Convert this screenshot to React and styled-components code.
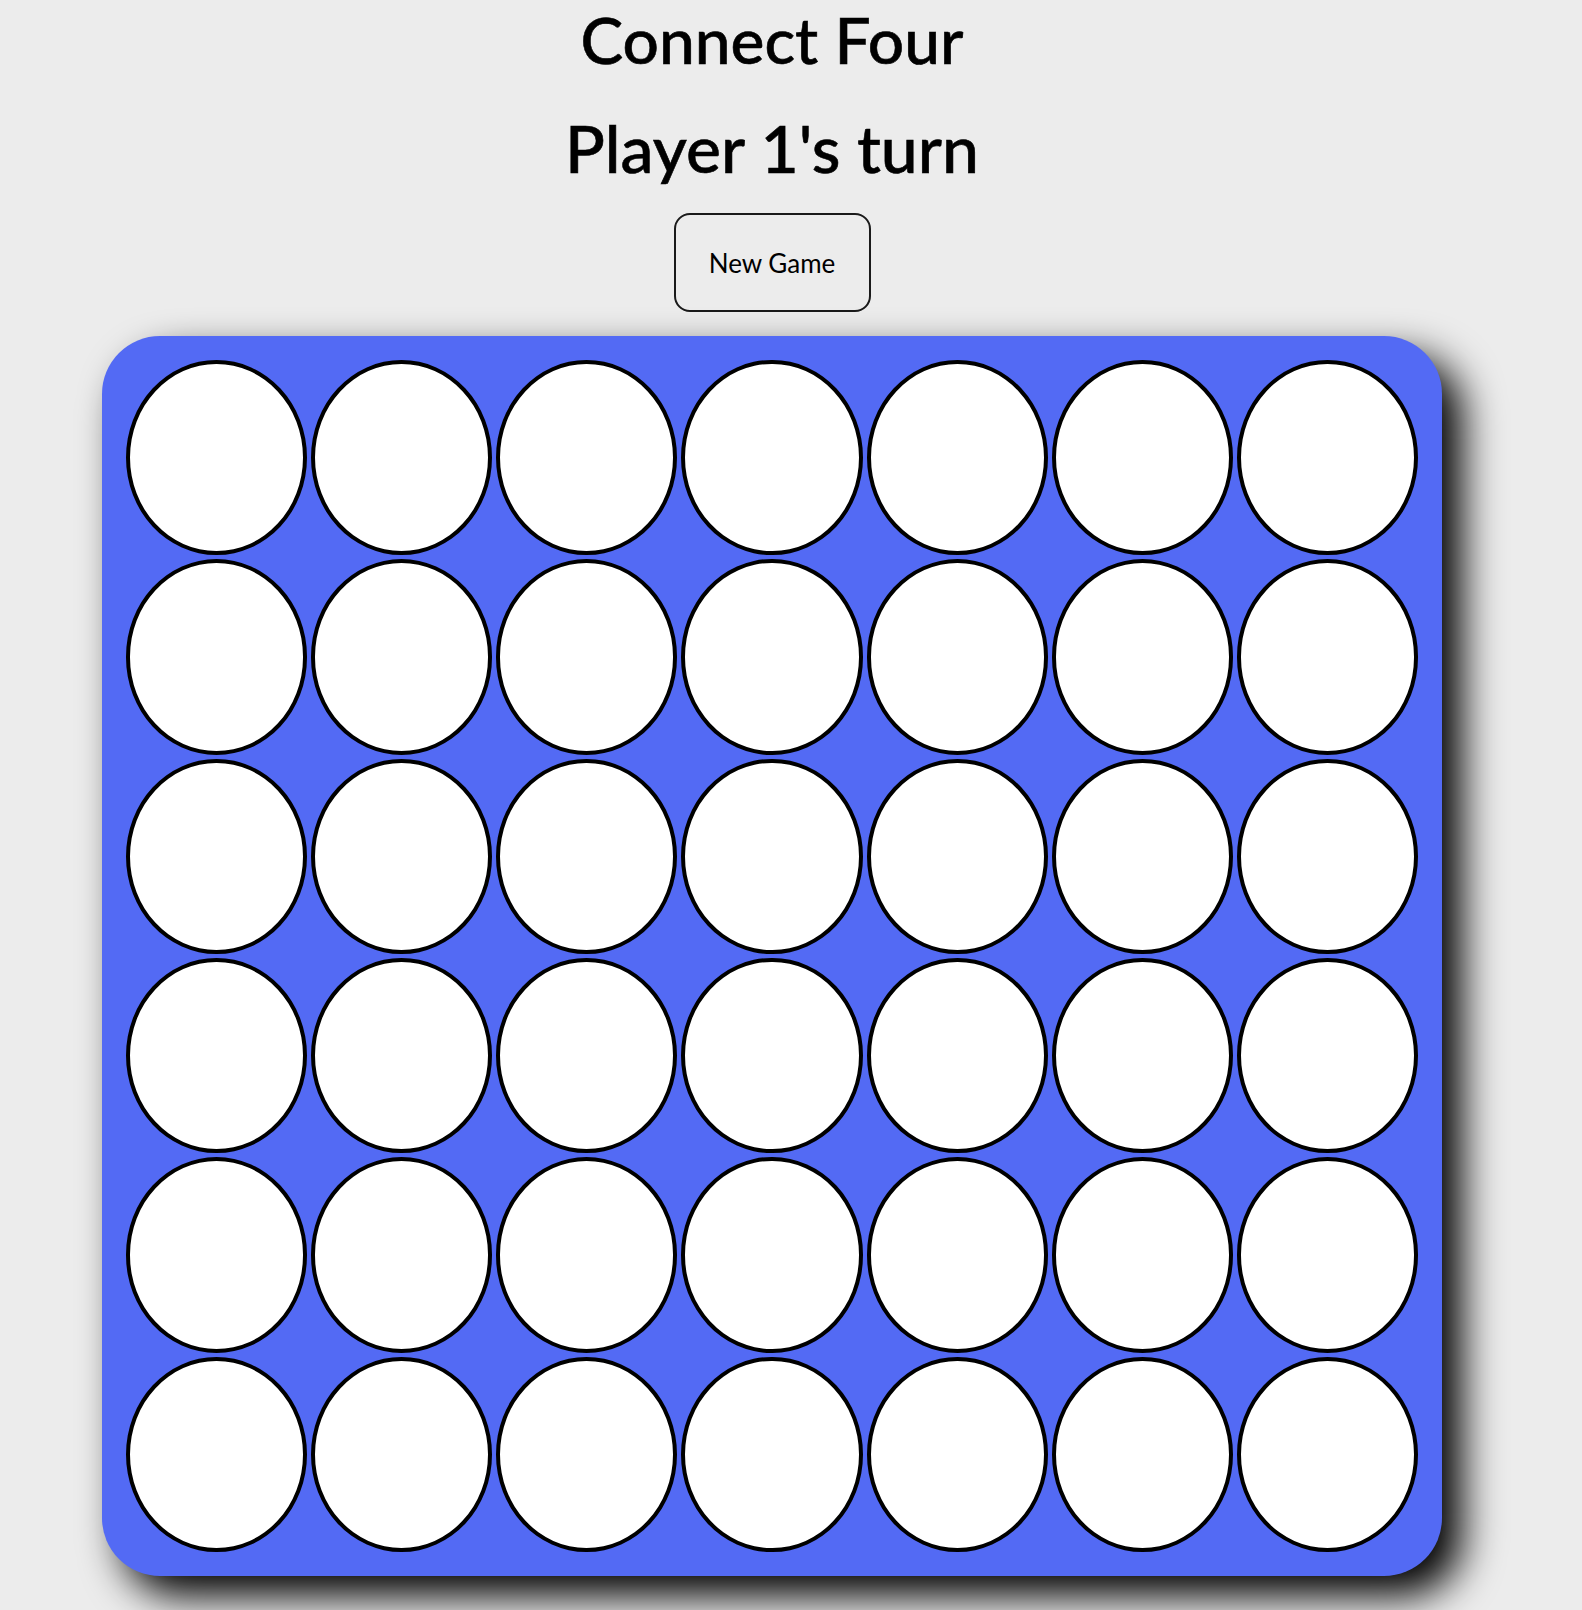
import React, { useState } from "react";
import styled, { createGlobalStyle } from "styled-components";

const ROWS = 6;
const COLS = 7;

const GlobalStyle = createGlobalStyle`
  html, body {
    margin: 0;
    padding: 0;
    background: #ececec;
  }
  body {
    font-family: Lato, "Noto Sans", "Liberation Sans", sans-serif;
    color: #000;
  }
`;

const Page = styled.div`
  width: 1544px;
  display: flex;
  flex-direction: column;
  align-items: center;
  padding-bottom: 34px;
`;

const Title = styled.h1`
  margin: 0;
  font-size: 64px;
  font-weight: 500;
  line-height: 80px;
  -webkit-text-stroke: 0.6px #000;
`;

const Status = styled.h2`
  margin: 28px 0 0;
  font-size: 66px;
  font-weight: 500;
  line-height: 80px;
  -webkit-text-stroke: 0.6px #000;
`;

const NewGameButton = styled.button`
  margin-top: 25px;
  width: 197px;
  height: 99px;
  border: 2px solid #1a1a1a;
  border-radius: 16px;
  background: transparent;
  font-family: inherit;
  font-size: 26px;
  color: #000;
  cursor: pointer;
`;

const Board = styled.div`
  margin-top: 24px;
  width: 1340px;
  height: 1240px;
  box-sizing: border-box;
  padding: 24px;
  background: #536af4;
  border-radius: 58px;
  box-shadow: 20px 20px 40px #000;
  display: grid;
  grid-template-columns: repeat(${COLS}, 1fr);
  grid-template-rows: repeat(${ROWS}, 1fr);
  gap: 4px;
`;

const Slot = styled.div`
  box-sizing: border-box;
  border: 4px solid #000;
  border-radius: 50%;
  background: ${(props) => (props.player === 1 ? "#e53935" : props.player === 2 ? "#fdd835" : "#fff")};
`;

const emptyBoard = () => Array.from({ length: ROWS }, () => Array(COLS).fill(0));

export default function App() {
  const [cells, setCells] = useState(emptyBoard);
  const [player, setPlayer] = useState(1);

  const drop = (col) => {
    const next = cells.map((r) => r.slice());
    for (let r = ROWS - 1; r >= 0; r--) {
      if (!next[r][col]) {
        next[r][col] = player;
        setCells(next);
        setPlayer(player === 1 ? 2 : 1);
        return;
      }
    }
  };

  return (
    <Page>
      <GlobalStyle />
      <Title>Connect Four</Title>
      <Status>Player {player}'s turn</Status>
      <NewGameButton
        onClick={() => {
          setCells(emptyBoard());
          setPlayer(1);
        }}
      >
        New Game
      </NewGameButton>
      <Board>
        {cells.map((row, r) =>
          row.map((v, c) => <Slot key={r + "-" + c} player={v} onClick={() => drop(c)} />)
        )}
      </Board>
    </Page>
  );
}
